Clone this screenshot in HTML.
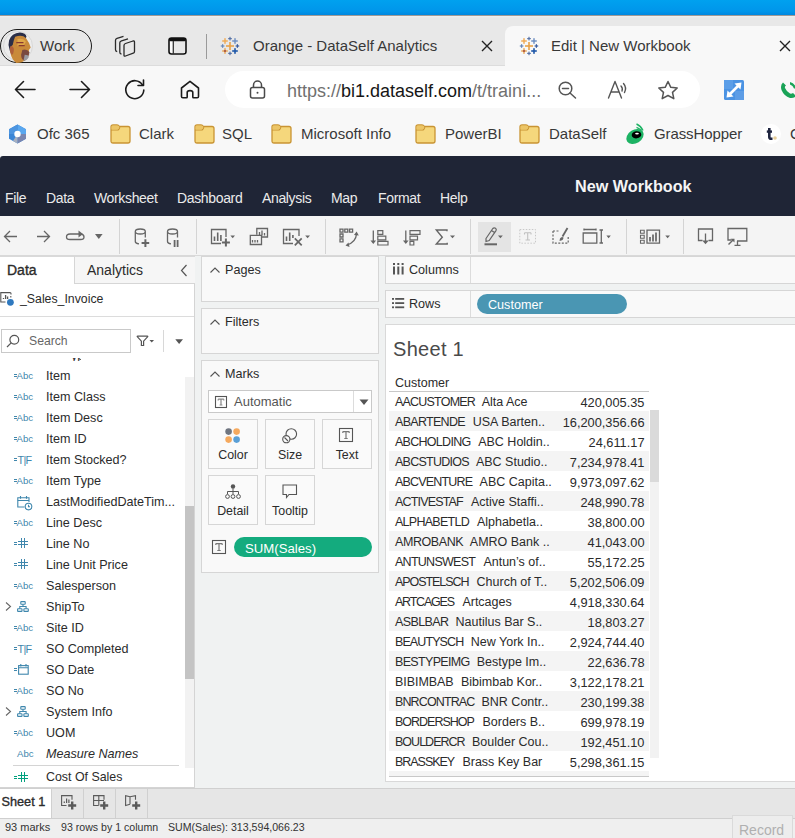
<!DOCTYPE html>
<html><head><meta charset="utf-8">
<style>
*{margin:0;padding:0;box-sizing:border-box}
html,body{width:795px;height:838px;overflow:hidden;background:#f7f7f7;font-family:"Liberation Sans",sans-serif;position:relative}
.a{position:absolute;white-space:nowrap}
svg{position:absolute;overflow:visible}
#blue{left:0;top:0;width:795px;height:16px;background:linear-gradient(#00a1ef,#0096ea 70%,#0088e0 92%,#a09a96 94%)}
#tabs{left:0;top:16px;width:795px;height:50px;border-bottom:1px solid #dcdcdc;background:linear-gradient(#f0f0f0,#e8e8e8 2px)}
.t15{font-size:15px;color:#383838}
#tbar{left:0;top:66px;width:795px;height:90px;background:#f8f8f8}
#hdr{left:0;top:156px;width:795px;height:60px;background:#1f2536;border-top-left-radius:3px}
.menu{font-size:14px;letter-spacing:-0.35px;color:#ebebeb;top:190px}
#ttb{left:0;top:216px;width:795px;height:40px;background:#f4f4f4;border-bottom:1px solid #d9d9d9}
</style></head><body>
<div class="a" id="blue"></div>
<div class="a" id="tabs"></div>
<!-- profile pill -->
<div class="a" style="left:0px;top:29px;width:92px;height:34px;border:1.6px solid #1a1a1a;border-radius:17px"></div>
<svg style="left:3px;top:31px" width="30" height="30" viewBox="0 0 30 30"><circle cx="15" cy="15" r="14.5" fill="#ececec" stroke="#d8d8d8" stroke-width="1"/>
<g transform="translate(-3.5 -1.5) scale(1.2)"><path d="M8 9 Q10 3 17 2.5 Q22 3 22.5 6 L21 9 Q15 8 13 12 L11 22 Q8 18 7.5 13 Z" fill="#2a2e48"/>
<path d="M13 6 Q19 4 22 7 Q25 11 26 15 L24.5 17 Q25 22 22 25 Q19 28 14 28 Q10 25 9 19 Q8 15 11 13 Q12 8 13 6 Z" fill="#c98a3a"/>
<path d="M15 8 Q20 7 22 10 L20 14 Q17 12 15 14 Z" fill="#e0a848"/>
<path d="M9 14 Q11 13 12 16 Q12 21 10 21 Q8 18 9 14 Z" fill="#b0603a"/>
<path d="M19 17 Q23 16 25 19 Q24 24 21 26 Q18 25 18 21 Z" fill="#7a4a40"/>
<path d="M21 21 Q24 21 24.5 23 Q23 26 20 26 Z" fill="#9a9aa0"/>
<path d="M14 11 H20 M16 13.5 H21" stroke="#8a3a30" stroke-width="1"/></g></svg>
<div class="a t15" style="left:40px;top:37px">Work</div>
<!-- inactive tab -->
<div class="a" style="left:206px;top:34px;width:1.2px;height:25px;background:#9a9a9a"></div>
<div class="a t15" style="left:253px;top:37px">Orange - DataSelf Analytics</div>
<!-- active tab -->
<div class="a" style="left:505px;top:26px;width:300px;height:41px;background:#f8f8f8;border-radius:8px 8px 0 0"></div>
<div class="a t15" style="left:551px;top:37px">Edit | New Workbook</div>
<div class="a" id="tbar"></div>
<!-- address bar -->
<div class="a" style="left:225px;top:71px;width:475px;height:37px;background:#fff;border-radius:19px"></div>
<div class="a" style="left:287px;top:80.5px;font-size:18px;color:#707070">https://<span style="color:#161616">bi1.dataself.com</span>/t/traini...</div>
<!-- bookmarks -->
<div class="a t15" style="left:37px;top:125px">Ofc 365</div>
<div class="a t15" style="left:139px;top:125px">Clark</div>
<div class="a t15" style="left:222px;top:125px">SQL</div>
<div class="a t15" style="left:301px;top:125px">Microsoft Info</div>
<div class="a t15" style="left:445px;top:125px">PowerBI</div>
<div class="a t15" style="left:549px;top:125px">DataSelf</div>
<div class="a t15" style="left:654px;top:125px;letter-spacing:-0.1px">GrassHopper</div>
<div class="a t15" style="left:790px;top:125px">C</div>

<!-- tab group icon -->
<svg style="left:114px;top:35px" width="22" height="22" viewBox="0 0 22 22" fill="none" stroke="#2b2b2b" stroke-width="1.3" stroke-linejoin="round">
<path d="M9.5 1.3 L3 3.3 Q1.5 3.8 1.5 5.3 V14.8 Q1.5 16.3 3.2 16.6"/>
<path d="M14 3.8 L7.5 5.8 Q5.8 6.3 5.8 7.8 V17.3 Q5.8 18.8 7.5 19.1"/>
<path d="M10 20.5 V10.5 Q10 9 11.5 8.5 L19 6 Q20.5 5.6 20.5 7 V16.5 Q20.5 17.8 19.3 18.2 L11.5 21 Q10 21.5 10 20.5 Z" fill="#e8e8e8"/>
</svg>
<!-- sidebar icon -->
<svg style="left:168px;top:37px" width="19" height="18" viewBox="0 0 19 18">
<rect x="1" y="1" width="17" height="16" rx="2.5" fill="#fafafa" stroke="#111" stroke-width="1.6"/>
<rect x="6" y="4" width="11" height="12" fill="#e8e8e8"/>
<rect x="1" y="1" width="17" height="3.2" rx="1.5" fill="#111"/>
<line x1="5.3" y1="4" x2="5.3" y2="17" stroke="#333" stroke-width="1.3"/>
</svg>
<svg style="left:221px;top:37px" width="18" height="18" viewBox="0 0 18 18"><rect x="5" y="8.2" width="8" height="1.6" fill="#e8a24a"/><rect x="8.2" y="5" width="1.6" height="8" fill="#e8a24a"/><rect x="7.2" y="1.0" width="3.6" height="1.2" fill="#5a74a8"/><rect x="8.4" y="-0.19999999999999996" width="1.2" height="3.6" fill="#5a74a8"/><rect x="7.2" y="15.799999999999999" width="3.6" height="1.2" fill="#5a74a8"/><rect x="8.4" y="14.599999999999998" width="1.2" height="3.6" fill="#5a74a8"/><rect x="-0.19999999999999996" y="8.4" width="3.6" height="1.2" fill="#6a88b8"/><rect x="1.0" y="7.2" width="1.2" height="3.6" fill="#6a88b8"/><rect x="14.599999999999998" y="8.4" width="3.6" height="1.2" fill="#3a5da0"/><rect x="15.799999999999999" y="7.2" width="1.2" height="3.6" fill="#3a5da0"/><rect x="1.2000000000000002" y="3.3" width="5.6" height="1.4" fill="#f0a850"/><rect x="3.3" y="1.2000000000000002" width="1.4" height="5.6" fill="#f0a850"/><rect x="11.2" y="3.3" width="5.6" height="1.4" fill="#6a8cc0"/><rect x="13.3" y="1.2000000000000002" width="1.4" height="5.6" fill="#6a8cc0"/><rect x="1.2000000000000002" y="13.3" width="5.6" height="1.4" fill="#e8a24a"/><rect x="3.3" y="11.2" width="1.4" height="5.6" fill="#e8a24a"/><rect x="3.3" y="13.3" width="1.4" height="1.4" fill="#7a1a3a"/><rect x="11.2" y="13.2" width="5.6" height="1.6" fill="#1f58a8"/><rect x="13.2" y="11.2" width="1.6" height="5.6" fill="#1f58a8"/></svg><svg style="left:520px;top:37px" width="18" height="18" viewBox="0 0 18 18"><rect x="5" y="8.2" width="8" height="1.6" fill="#e8a24a"/><rect x="8.2" y="5" width="1.6" height="8" fill="#e8a24a"/><rect x="7.2" y="1.0" width="3.6" height="1.2" fill="#5a74a8"/><rect x="8.4" y="-0.19999999999999996" width="1.2" height="3.6" fill="#5a74a8"/><rect x="7.2" y="15.799999999999999" width="3.6" height="1.2" fill="#5a74a8"/><rect x="8.4" y="14.599999999999998" width="1.2" height="3.6" fill="#5a74a8"/><rect x="-0.19999999999999996" y="8.4" width="3.6" height="1.2" fill="#6a88b8"/><rect x="1.0" y="7.2" width="1.2" height="3.6" fill="#6a88b8"/><rect x="14.599999999999998" y="8.4" width="3.6" height="1.2" fill="#3a5da0"/><rect x="15.799999999999999" y="7.2" width="1.2" height="3.6" fill="#3a5da0"/><rect x="1.2000000000000002" y="3.3" width="5.6" height="1.4" fill="#f0a850"/><rect x="3.3" y="1.2000000000000002" width="1.4" height="5.6" fill="#f0a850"/><rect x="11.2" y="3.3" width="5.6" height="1.4" fill="#6a8cc0"/><rect x="13.3" y="1.2000000000000002" width="1.4" height="5.6" fill="#6a8cc0"/><rect x="1.2000000000000002" y="13.3" width="5.6" height="1.4" fill="#e8a24a"/><rect x="3.3" y="11.2" width="1.4" height="5.6" fill="#e8a24a"/><rect x="3.3" y="13.3" width="1.4" height="1.4" fill="#7a1a3a"/><rect x="11.2" y="13.2" width="5.6" height="1.6" fill="#1f58a8"/><rect x="13.2" y="11.2" width="1.6" height="5.6" fill="#1f58a8"/></svg>
<!-- close X -->
<svg style="left:481px;top:40px" width="12" height="12" viewBox="0 0 12 12" stroke="#222" stroke-width="1.4"><path d="M1 1 L11 11 M11 1 L1 11"/></svg>
<svg style="left:779px;top:40px" width="12" height="12" viewBox="0 0 12 12" stroke="#222" stroke-width="1.4"><path d="M1 1 L11 11 M11 1 L1 11"/></svg>
<!-- nav -->
<svg style="left:14px;top:80px" width="22" height="19" viewBox="0 0 22 19" fill="none" stroke="#1b1b1b" stroke-width="1.6" stroke-linecap="round" stroke-linejoin="round"><path d="M21 9.5 H1.5 M9.5 1.5 L1.5 9.5 L9.5 17.5"/></svg>
<svg style="left:69px;top:80px" width="22" height="19" viewBox="0 0 22 19" fill="none" stroke="#1b1b1b" stroke-width="1.6" stroke-linecap="round" stroke-linejoin="round"><path d="M1 9.5 H20.5 M12.5 1.5 L20.5 9.5 L12.5 17.5"/></svg>
<svg style="left:124px;top:79px" width="22" height="21" viewBox="0 0 22 21" fill="none" stroke="#1b1b1b" stroke-width="1.6" stroke-linecap="round" stroke-linejoin="round"><path d="M18.5 6 A9 9 0 1 0 19.8 11"/><path d="M19.5 1 V6.5 H14"/></svg>
<svg style="left:180px;top:80px" width="20" height="19" viewBox="0 0 20 19" fill="none" stroke="#1b1b1b" stroke-width="1.6" stroke-linejoin="round"><path d="M1.5 8 L10 1.3 L18.5 8 V16.5 Q18.5 17.8 17.2 17.8 H13.5 Q12.8 17.8 12.8 17 V12.5 Q12.8 10.6 10 10.6 Q7.2 10.6 7.2 12.5 V17 Q7.2 17.8 6.5 17.8 H2.8 Q1.5 17.8 1.5 16.5 Z"/></svg>
<!-- lock -->
<svg style="left:249px;top:80px" width="17" height="19" viewBox="0 0 17 19" fill="none" stroke="#4a4a4a" stroke-width="1.5"><path d="M4.5 7.5 V5 A4 4 0 0 1 12.5 5 V7.5"/><rect x="1.5" y="7.5" width="14" height="10.5" rx="2"/><circle cx="8.5" cy="12.8" r="1" fill="#4a4a4a" stroke="none"/></svg>
<!-- zoom out -->
<svg style="left:558px;top:81px" width="19" height="18" viewBox="0 0 19 18" fill="none" stroke="#555" stroke-width="1.5" stroke-linecap="round"><circle cx="7.5" cy="7.5" r="6.3"/><path d="M12 12 L17.5 17 M4.5 7.5 H10.5"/></svg>
<!-- read aloud -->
<svg style="left:607px;top:80px" width="22" height="19" viewBox="0 0 22 19" fill="none" stroke="#555" stroke-width="1.4" stroke-linecap="round" stroke-linejoin="round"><path d="M1.5 18 L8 1.5 L14.5 18 M4 12 H12"/><path d="M14 6 Q16 8 15 11 M16.5 3.5 Q20 7.5 17.5 12.5"/></svg>
<!-- star -->
<svg style="left:657px;top:80px" width="22" height="20" viewBox="0 0 22 20" fill="none" stroke="#555" stroke-width="1.5" stroke-linejoin="round"><path d="M11 1.5 L13.8 7.3 L20.2 8 L15.5 12.4 L16.8 18.7 L11 15.5 L5.2 18.7 L6.5 12.4 L1.8 8 L8.2 7.3 Z"/></svg>
<!-- blue expand -->
<svg style="left:724px;top:80px" width="20" height="20" viewBox="0 0 20 20"><rect width="20" height="20" rx="1.5" fill="#4b93e3"/><rect x="0" y="0" width="9" height="9" fill="#5b9ee8"/><rect x="11" y="11" width="9" height="9" fill="#5d9de6"/><path d="M4 16 L16 4" stroke="#fff" stroke-width="2.6"/><path d="M2.5 17.5 L3.5 10.5 L9.5 16.5 Z M17.5 2.5 L10.5 3.5 L16.5 9.5 Z" fill="#fff"/></svg>
<!-- green phone -->
<svg style="left:780px;top:81px" width="18" height="18" viewBox="0 0 18 18"><path d="M3 1.5 Q0 4 1.5 9 Q4 15 10 17 Q14 17.5 16 15 L13 12 Q11.5 13 10 12.5 Q6.5 10.5 5 7 Q4.5 5.5 6 4.5 Z" fill="#1aa357"/><path d="M10 1 Q15 2.5 16.5 7.5 L14 7.5 Q13 4.5 10 3.5 Z" fill="#1aa357"/></svg>
<!-- bookmarks icons -->
<svg style="left:8px;top:124px" width="19" height="20" viewBox="0 0 19 20"><path d="M9.5 0.5 L18 5.3 V14.7 L9.5 19.5 L1 14.7 V5.3 Z" fill="#3b86d6"/><path d="M9.5 0.5 L18 5.3 V10 L9.5 10 Z" fill="#5aa7ef"/><path d="M18 10 V14.7 L9.5 19.5 L9.5 10 Z" fill="#7a86b0"/><path d="M9.5 19.5 L5 17 L9.5 10 Z" fill="#a8b0c0"/><path d="M1 5.3 L9.5 0.5 L9.5 10 L1 10 Z" fill="#4d95e0"/><circle cx="9.5" cy="10" r="3.2" fill="#fff"/></svg>
<svg style="left:110px;top:124px" width="21" height="20" viewBox="0 0 21 20"><path d="M1 3 Q1 1 3 1 H7 Q8.5 1 9.5 2.5 H18 Q20 2.5 20 4.5 V17 Q20 19 18 19 H3 Q1 19 1 17 Z" fill="#f5d77c" stroke="#c99433" stroke-width="1.3"/><path d="M1 6 H7.5 Q9 6 9.8 3" fill="none" stroke="#c99433" stroke-width="1.2"/><path d="M1.6 3 Q1.6 1.6 3 1.6 H7 Q8.5 1.6 9.5 3 Q8.8 5.4 7.5 5.4 H1.6 Z" fill="#ecc566"/></svg><svg style="left:194px;top:124px" width="21" height="20" viewBox="0 0 21 20"><path d="M1 3 Q1 1 3 1 H7 Q8.5 1 9.5 2.5 H18 Q20 2.5 20 4.5 V17 Q20 19 18 19 H3 Q1 19 1 17 Z" fill="#f5d77c" stroke="#c99433" stroke-width="1.3"/><path d="M1 6 H7.5 Q9 6 9.8 3" fill="none" stroke="#c99433" stroke-width="1.2"/><path d="M1.6 3 Q1.6 1.6 3 1.6 H7 Q8.5 1.6 9.5 3 Q8.8 5.4 7.5 5.4 H1.6 Z" fill="#ecc566"/></svg><svg style="left:271px;top:124px" width="21" height="20" viewBox="0 0 21 20"><path d="M1 3 Q1 1 3 1 H7 Q8.5 1 9.5 2.5 H18 Q20 2.5 20 4.5 V17 Q20 19 18 19 H3 Q1 19 1 17 Z" fill="#f5d77c" stroke="#c99433" stroke-width="1.3"/><path d="M1 6 H7.5 Q9 6 9.8 3" fill="none" stroke="#c99433" stroke-width="1.2"/><path d="M1.6 3 Q1.6 1.6 3 1.6 H7 Q8.5 1.6 9.5 3 Q8.8 5.4 7.5 5.4 H1.6 Z" fill="#ecc566"/></svg><svg style="left:415px;top:124px" width="21" height="20" viewBox="0 0 21 20"><path d="M1 3 Q1 1 3 1 H7 Q8.5 1 9.5 2.5 H18 Q20 2.5 20 4.5 V17 Q20 19 18 19 H3 Q1 19 1 17 Z" fill="#f5d77c" stroke="#c99433" stroke-width="1.3"/><path d="M1 6 H7.5 Q9 6 9.8 3" fill="none" stroke="#c99433" stroke-width="1.2"/><path d="M1.6 3 Q1.6 1.6 3 1.6 H7 Q8.5 1.6 9.5 3 Q8.8 5.4 7.5 5.4 H1.6 Z" fill="#ecc566"/></svg><svg style="left:519px;top:124px" width="21" height="20" viewBox="0 0 21 20"><path d="M1 3 Q1 1 3 1 H7 Q8.5 1 9.5 2.5 H18 Q20 2.5 20 4.5 V17 Q20 19 18 19 H3 Q1 19 1 17 Z" fill="#f5d77c" stroke="#c99433" stroke-width="1.3"/><path d="M1 6 H7.5 Q9 6 9.8 3" fill="none" stroke="#c99433" stroke-width="1.2"/><path d="M1.6 3 Q1.6 1.6 3 1.6 H7 Q8.5 1.6 9.5 3 Q8.8 5.4 7.5 5.4 H1.6 Z" fill="#ecc566"/></svg>
<svg style="left:620px;top:118px" width="30" height="30" viewBox="0 0 30 30"><ellipse cx="15" cy="18.5" rx="9.3" ry="6.8" fill="#1db364" transform="rotate(-32 15 18.5)"/><path d="M16.5 6 Q21 8 23 12.5 M16.5 9.3 Q19.5 10.5 21.3 12.5" stroke="#1db364" stroke-width="1.4" fill="none"/><ellipse cx="16.5" cy="16.8" rx="4.8" ry="3.6" fill="#000" transform="rotate(-8 16.5 16.8)"/><ellipse cx="17" cy="15.6" rx="1.9" ry="0.9" fill="#fff"/></svg>
<svg style="left:761px;top:124px" width="20" height="20" viewBox="0 0 20 20"><circle cx="10" cy="10" r="10" fill="#fff"/><path d="M8.3 4 V13 Q8.3 14.8 10.2 14.8 H11.5" stroke="#1f2540" stroke-width="2.6" fill="none"/><path d="M5.8 7.6 H11" stroke="#1f2540" stroke-width="2.4"/><circle cx="14" cy="14" r="1.8" fill="#e8cf9a"/></svg>

<!-- tableau header -->
<div class="a" id="hdr"></div>
<div class="a" style="left:575px;top:177px;font-size:16.2px;font-weight:bold;color:#f5f5f5">New Workbook</div>
<div class="a menu" style="left:5px">File</div>
<div class="a menu" style="left:46px">Data</div>
<div class="a menu" style="left:94px">Worksheet</div>
<div class="a menu" style="left:177px">Dashboard</div>
<div class="a menu" style="left:262px">Analysis</div>
<div class="a menu" style="left:331px">Map</div>
<div class="a menu" style="left:378px">Format</div>
<div class="a menu" style="left:440px">Help</div>
<div class="a" id="ttb"></div>
<!-- PANES1 -->
<div class="a" style="left:0;top:256px;width:795px;height:532px;background:#f0f2f2"></div>
<div class="a" style="left:0;top:256px;width:195px;height:532px;background:#fff;border-right:1px solid #d4d4d4;border-top:1px solid #d9d9d9;border-bottom:1px solid #d4d4d4"></div>
<div class="a" style="left:74px;top:256px;width:121px;height:28px;background:#f6f6f6;border-left:1px solid #d6d6d6;border-bottom:1px solid #d6d6d6;border-top:1px solid #d9d9d9"></div>
<div class="a tb" style="left:7px;top:262px;font-size:14px;-webkit-text-stroke:0.35px #2b2b2b;color:#2b2b2b">Data</div>
<div class="a tb" style="left:87px;top:262px;font-size:14px;color:#2b2b2b">Analytics</div>
<svg style="left:180px;top:264px" width="8" height="13" viewBox="0 0 8 13" fill="none" stroke="#555" stroke-width="1.2"><path d="M6.5 1 L1.5 6.5 L6.5 12"/></svg>
<svg style="left:0;top:291px" width="16" height="16" viewBox="0 0 16 16" fill="none" stroke="#555" stroke-width="1.1"><path d="M5.5 11 H0.8 V1.6 H10 Q11 1.6 11 2.6 V3.5 M10.8 5 V6.5"/><path d="M3.5 8 V7 M5.6 8 V4 M7.6 8 V5.5" stroke-width="1.3"/><circle cx="10.4" cy="11.3" r="3.4" fill="#2f79bf" stroke="none"/></svg>
<div class="a tb" style="left:20px;top:292px;font-size:12.3px;color:#2b2b2b">_Sales_Invoice</div>
<div class="a" style="left:0;top:316px;width:194px;height:1px;background:#dcdcdc"></div>
<div class="a" style="left:1px;top:329px;width:130px;height:24px;border:1px solid #c9c9c9;background:#fff"></div>
<svg style="left:6px;top:334px" width="14" height="14" viewBox="0 0 14 14" fill="none" stroke="#555" stroke-width="1.2"><circle cx="8.3" cy="5.7" r="4.4"/><path d="M5.2 8.8 L1 13"/></svg>
<div class="a tb" style="left:29px;top:334px;font-size:12.2px;color:#666">Search</div>
<svg style="left:136px;top:334px" width="22" height="14" viewBox="0 0 22 14" fill="none" stroke="#555" stroke-width="1.2"><path d="M1.2 2.6 Q1.2 2.2 1.7 2.2 H11.3 Q11.8 2.2 11.8 2.6 L7.6 7.2 V11.5 H5.4 V7.2 Z"/><path d="M13.5 6 H18 L15.75 8.5 Z" fill="#555" stroke="none"/></svg>
<div class="a" style="left:163px;top:330px;width:1px;height:22px;background:#d8d8d8"></div>
<svg style="left:175px;top:339px" width="9" height="6" viewBox="0 0 9 6"><path d="M0.3 0.3 H8 L4.15 5 Z" fill="#555"/></svg>
<div class="a" style="left:14px;top:374px;width:3px;height:1.2px;background:#3f87ad"></div><div class="a" style="left:14px;top:376.3px;width:3px;height:1.2px;background:#3f87ad"></div><div class="a" style="left:16.5px;top:371px;font-size:9.6px;line-height:10px;color:#3f87ad;letter-spacing:0px">Abc</div>
<div class="a tb" style="left:46px;top:369px;font-size:12.6px;color:#2b2b2b;">Item</div>
<div class="a" style="left:14px;top:395px;width:3px;height:1.2px;background:#3f87ad"></div><div class="a" style="left:14px;top:397.3px;width:3px;height:1.2px;background:#3f87ad"></div><div class="a" style="left:16.5px;top:392px;font-size:9.6px;line-height:10px;color:#3f87ad;letter-spacing:0px">Abc</div>
<div class="a tb" style="left:46px;top:390px;font-size:12.6px;color:#2b2b2b;">Item Class</div>
<div class="a" style="left:14px;top:416px;width:3px;height:1.2px;background:#3f87ad"></div><div class="a" style="left:14px;top:418.3px;width:3px;height:1.2px;background:#3f87ad"></div><div class="a" style="left:16.5px;top:413px;font-size:9.6px;line-height:10px;color:#3f87ad;letter-spacing:0px">Abc</div>
<div class="a tb" style="left:46px;top:411px;font-size:12.6px;color:#2b2b2b;">Item Desc</div>
<div class="a" style="left:14px;top:437px;width:3px;height:1.2px;background:#3f87ad"></div><div class="a" style="left:14px;top:439.3px;width:3px;height:1.2px;background:#3f87ad"></div><div class="a" style="left:16.5px;top:434px;font-size:9.6px;line-height:10px;color:#3f87ad;letter-spacing:0px">Abc</div>
<div class="a tb" style="left:46px;top:432px;font-size:12.6px;color:#2b2b2b;">Item ID</div>
<div class="a" style="left:14px;top:458px;width:3px;height:1.2px;background:#3f87ad"></div><div class="a" style="left:14px;top:460.3px;width:3px;height:1.2px;background:#3f87ad"></div><div class="a" style="left:17.5px;top:454.5px;font-size:10.8px;line-height:11px;color:#3f87ad;letter-spacing:-0.7px">T|F</div>
<div class="a tb" style="left:46px;top:453px;font-size:12.6px;color:#2b2b2b;">Item Stocked?</div>
<div class="a" style="left:14px;top:479px;width:3px;height:1.2px;background:#3f87ad"></div><div class="a" style="left:14px;top:481.3px;width:3px;height:1.2px;background:#3f87ad"></div><div class="a" style="left:16.5px;top:476px;font-size:9.6px;line-height:10px;color:#3f87ad;letter-spacing:0px">Abc</div>
<div class="a tb" style="left:46px;top:474px;font-size:12.6px;color:#2b2b2b;">Item Type</div>
<svg style="left:17px;top:495px" width="16" height="16" viewBox="0 0 16 16" fill="none" stroke="#3f87ad" stroke-width="1.1"><path d="M7.5 12 H0.8 V2.8 H12 V7"/><path d="M0.8 5.5 H12 M3.5 1 V3.8 M9.5 1 V3.8"/><circle cx="11.5" cy="11.6" r="3.3" fill="#fff"/><path d="M11.5 9.8 V11.8 H13"/></svg>
<div class="a tb" style="left:46px;top:495px;font-size:12.6px;color:#2b2b2b;">LastModifiedDateTim...</div>
<div class="a" style="left:14px;top:521px;width:3px;height:1.2px;background:#3f87ad"></div><div class="a" style="left:14px;top:523.3px;width:3px;height:1.2px;background:#3f87ad"></div><div class="a" style="left:16.5px;top:518px;font-size:9.6px;line-height:10px;color:#3f87ad;letter-spacing:0px">Abc</div>
<div class="a tb" style="left:46px;top:516px;font-size:12.6px;color:#2b2b2b;">Line Desc</div>
<div class="a" style="left:14px;top:542px;width:3px;height:1.2px;background:#3f87ad"></div><div class="a" style="left:14px;top:544.3px;width:3px;height:1.2px;background:#3f87ad"></div><div class="a" style="left:21px;top:538px;width:1.3px;height:10px;background:#3f87ad"></div><div class="a" style="left:24px;top:538px;width:1.3px;height:10px;background:#3f87ad"></div><div class="a" style="left:18px;top:541px;width:10px;height:1.3px;background:#3f87ad"></div><div class="a" style="left:18px;top:544px;width:10px;height:1.3px;background:#3f87ad"></div>
<div class="a tb" style="left:46px;top:537px;font-size:12.6px;color:#2b2b2b;">Line No</div>
<div class="a" style="left:14px;top:563px;width:3px;height:1.2px;background:#3f87ad"></div><div class="a" style="left:14px;top:565.3px;width:3px;height:1.2px;background:#3f87ad"></div><div class="a" style="left:21px;top:559px;width:1.3px;height:10px;background:#3f87ad"></div><div class="a" style="left:24px;top:559px;width:1.3px;height:10px;background:#3f87ad"></div><div class="a" style="left:18px;top:562px;width:10px;height:1.3px;background:#3f87ad"></div><div class="a" style="left:18px;top:565px;width:10px;height:1.3px;background:#3f87ad"></div>
<div class="a tb" style="left:46px;top:558px;font-size:12.6px;color:#2b2b2b;">Line Unit Price</div>
<div class="a" style="left:14px;top:584px;width:3px;height:1.2px;background:#3f87ad"></div><div class="a" style="left:14px;top:586.3px;width:3px;height:1.2px;background:#3f87ad"></div><div class="a" style="left:16.5px;top:581px;font-size:9.6px;line-height:10px;color:#3f87ad;letter-spacing:0px">Abc</div>
<div class="a tb" style="left:46px;top:579px;font-size:12.6px;color:#2b2b2b;">Salesperson</div>
<svg style="left:5px;top:601px" width="8" height="12" viewBox="0 0 8 12" fill="none" stroke="#666" stroke-width="1.1"><path d="M1 1.5 L5.5 5.5 L1 9.5"/></svg><svg style="left:17px;top:601px" width="12" height="12" viewBox="0 0 12 12" fill="none" stroke="#3f87ad" stroke-width="1.1"><rect x="3.8" y="0.6" width="4.4" height="2.6" rx="0.5"/><rect x="0.6" y="7.8" width="4.4" height="2.6" rx="0.5"/><rect x="6.9" y="7.8" width="4.4" height="2.6" rx="0.5"/><path d="M6 3.2 V5.5 M2.8 7.8 V5.5 H9.1 V7.8"/></svg>
<div class="a tb" style="left:46px;top:600px;font-size:12.6px;color:#2b2b2b;">ShipTo</div>
<div class="a" style="left:14px;top:626px;width:3px;height:1.2px;background:#3f87ad"></div><div class="a" style="left:14px;top:628.3px;width:3px;height:1.2px;background:#3f87ad"></div><div class="a" style="left:16.5px;top:623px;font-size:9.6px;line-height:10px;color:#3f87ad;letter-spacing:0px">Abc</div>
<div class="a tb" style="left:46px;top:621px;font-size:12.6px;color:#2b2b2b;">Site ID</div>
<div class="a" style="left:14px;top:647px;width:3px;height:1.2px;background:#3f87ad"></div><div class="a" style="left:14px;top:649.3px;width:3px;height:1.2px;background:#3f87ad"></div><div class="a" style="left:17.5px;top:643.5px;font-size:10.8px;line-height:11px;color:#3f87ad;letter-spacing:-0.7px">T|F</div>
<div class="a tb" style="left:46px;top:642px;font-size:12.6px;color:#2b2b2b;">SO Completed</div>
<div class="a" style="left:14px;top:668px;width:3px;height:1.2px;background:#3f87ad"></div><div class="a" style="left:14px;top:670.3px;width:3px;height:1.2px;background:#3f87ad"></div><svg style="left:18px;top:664px" width="12" height="12" viewBox="0 0 12 12" fill="none" stroke="#3f87ad" stroke-width="1.1"><rect x="0.6" y="1.6" width="9.6" height="8.6"/><path d="M0.6 3.8 H10.2 M2.8 0 V2.5 M8 0 V2.5"/></svg>
<div class="a tb" style="left:46px;top:663px;font-size:12.6px;color:#2b2b2b;">SO Date</div>
<div class="a" style="left:14px;top:689px;width:3px;height:1.2px;background:#3f87ad"></div><div class="a" style="left:14px;top:691.3px;width:3px;height:1.2px;background:#3f87ad"></div><div class="a" style="left:16.5px;top:686px;font-size:9.6px;line-height:10px;color:#3f87ad;letter-spacing:0px">Abc</div>
<div class="a tb" style="left:46px;top:684px;font-size:12.6px;color:#2b2b2b;">SO No</div>
<svg style="left:5px;top:706px" width="8" height="12" viewBox="0 0 8 12" fill="none" stroke="#666" stroke-width="1.1"><path d="M1 1.5 L5.5 5.5 L1 9.5"/></svg><svg style="left:17px;top:706px" width="12" height="12" viewBox="0 0 12 12" fill="none" stroke="#3f87ad" stroke-width="1.1"><rect x="3.8" y="0.6" width="4.4" height="2.6" rx="0.5"/><rect x="0.6" y="7.8" width="4.4" height="2.6" rx="0.5"/><rect x="6.9" y="7.8" width="4.4" height="2.6" rx="0.5"/><path d="M6 3.2 V5.5 M2.8 7.8 V5.5 H9.1 V7.8"/></svg>
<div class="a tb" style="left:46px;top:705px;font-size:12.6px;color:#2b2b2b;">System Info</div>
<div class="a" style="left:14px;top:731px;width:3px;height:1.2px;background:#3f87ad"></div><div class="a" style="left:14px;top:733.3px;width:3px;height:1.2px;background:#3f87ad"></div><div class="a" style="left:16.5px;top:728px;font-size:9.6px;line-height:10px;color:#3f87ad;letter-spacing:0px">Abc</div>
<div class="a tb" style="left:46px;top:726px;font-size:12.6px;color:#2b2b2b;">UOM</div>
<div class="a" style="left:17px;top:749px;font-size:9.6px;line-height:10px;color:#3f87ad;letter-spacing:0px">Abc</div>
<div class="a tb" style="left:46px;top:747px;font-size:12.6px;color:#2b2b2b;font-style:italic;">Measure Names</div>
<div class="a" style="left:71px;top:358px;width:10px;height:3px;overflow:hidden"><div style="position:absolute;left:0;top:-9px;font-size:12.6px;color:#333">yp</div></div>
<div class="a" style="left:13px;top:765px;width:166px;height:1px;background:#d4d4d4"></div>
<div class="a" style="left:14px;top:776px;width:3px;height:1.2px;background:#00a07e"></div><div class="a" style="left:14px;top:778.3px;width:3px;height:1.2px;background:#00a07e"></div><div class="a" style="left:21px;top:772px;width:1.3px;height:10px;background:#00a07e"></div><div class="a" style="left:24px;top:772px;width:1.3px;height:10px;background:#00a07e"></div><div class="a" style="left:18px;top:775px;width:10px;height:1.3px;background:#00a07e"></div><div class="a" style="left:18px;top:778px;width:10px;height:1.3px;background:#00a07e"></div>
<div class="a tb" style="left:46px;top:770px;font-size:12.4px;color:#2b2b2b">Cost Of Sales</div>
<div class="a" style="left:185px;top:377px;width:9px;height:391px;background:#f2f2f2"></div>
<div class="a" style="left:185px;top:506px;width:9px;height:173px;background:#c4c4c4"></div>
<!-- /PANES1 -->
<!-- PANES2 -->
<div class="a" style="left:201px;top:256px;width:178px;height:46px;background:#f9f9f9;border:1px solid #d6d6d6"></div>
<div class="a" style="left:201px;top:308px;width:178px;height:46px;background:#f9f9f9;border:1px solid #d6d6d6"></div>
<div class="a" style="left:201px;top:360px;width:178px;height:213px;background:#f9f9f9;border:1px solid #d6d6d6"></div>
<svg style="left:210px;top:267px" width="10" height="6" viewBox="0 0 10 6" fill="none" stroke="#555" stroke-width="1.1"><path d="M0.5 5.5 L5 1 L9.5 5.5"/></svg>
<div class="a tb" style="left:225px;top:263px;font-size:12.6px;color:#2b2b2b">Pages</div>
<svg style="left:210px;top:319px" width="10" height="6" viewBox="0 0 10 6" fill="none" stroke="#555" stroke-width="1.1"><path d="M0.5 5.5 L5 1 L9.5 5.5"/></svg>
<div class="a tb" style="left:225px;top:315px;font-size:12.6px;color:#2b2b2b">Filters</div>
<svg style="left:210px;top:371px" width="10" height="6" viewBox="0 0 10 6" fill="none" stroke="#555" stroke-width="1.1"><path d="M0.5 5.5 L5 1 L9.5 5.5"/></svg>
<div class="a tb" style="left:225px;top:367px;font-size:12.6px;color:#2b2b2b">Marks</div>
<div class="a" style="left:208px;top:390px;width:164px;height:23px;background:#fff;border:1px solid #c9c9c9"></div>
<div class="a" style="left:353px;top:391px;width:1px;height:21px;background:#dcdcdc"></div>
<svg style="left:359px;top:399px" width="10" height="7" viewBox="0 0 10 7"><path d="M0.5 0.5 H9.5 L5 6 Z" fill="#555"/></svg>
<svg style="left:215px;top:396px" width="12" height="12" viewBox="0 0 12 12" fill="none" stroke="#555" stroke-width="1.1"><rect x="0.5" y="0.5" width="11" height="11"/><path d="M3.2 3.2 H8.8 M6 3.2 V9 M4.6 9 H7.4 M3.2 3.2 V4.4 M8.8 3.2 V4.4" stroke="#888" stroke-width="1.2"/></svg>
<div class="a tb" style="left:234px;top:394px;font-size:13px;color:#555">Automatic</div>
<div class="a" style="left:208px;top:419px;width:50px;height:50px;background:#fafafa;border:1px solid #d6d6d6"></div>
<div class="a tb" style="left:208px;top:448px;width:50px;text-align:center;font-size:12.4px;color:#2b2b2b">Color</div>
<div class="a" style="left:265px;top:419px;width:50px;height:50px;background:#fafafa;border:1px solid #d6d6d6"></div>
<div class="a tb" style="left:265px;top:448px;width:50px;text-align:center;font-size:12.4px;color:#2b2b2b">Size</div>
<div class="a" style="left:322px;top:419px;width:50px;height:50px;background:#fafafa;border:1px solid #d6d6d6"></div>
<div class="a tb" style="left:322px;top:448px;width:50px;text-align:center;font-size:12.4px;color:#2b2b2b">Text</div>
<div class="a" style="left:208px;top:475px;width:50px;height:50px;background:#fafafa;border:1px solid #d6d6d6"></div>
<div class="a tb" style="left:208px;top:504px;width:50px;text-align:center;font-size:12.4px;color:#2b2b2b">Detail</div>
<div class="a" style="left:265px;top:475px;width:50px;height:50px;background:#fafafa;border:1px solid #d6d6d6"></div>
<div class="a tb" style="left:265px;top:504px;width:50px;text-align:center;font-size:12.4px;color:#2b2b2b">Tooltip</div>
<svg style="left:225px;top:428px" width="16" height="16" viewBox="0 0 16 16"><circle cx="3.6" cy="3.6" r="3.3" fill="#6f7580"/><circle cx="11.6" cy="3.6" r="3.3" fill="#f5a95e"/><circle cx="3.6" cy="11.6" r="3.3" fill="#f5a95e"/><circle cx="11.6" cy="11.6" r="3.3" fill="#5a9fd6"/></svg>
<svg style="left:282px;top:428px" width="16" height="16" viewBox="0 0 16 16" fill="none" stroke="#555" stroke-width="1.1"><circle cx="9.3" cy="6" r="5.3"/><circle cx="4.3" cy="11.2" r="3.6" fill="#fafafa"/><path d="M2.5 9.5 L6 13"/></svg>
<svg style="left:339px;top:428px" width="14" height="14" viewBox="0 0 14 14" fill="none" stroke="#555" stroke-width="1.1"><rect x="0.5" y="0.5" width="13" height="13"/><path d="M3.8 3.6 H10.2 M7 3.6 V10.5 M5.3 10.5 H8.7 M3.8 3.6 V5 M10.2 3.6 V5" stroke="#777" stroke-width="1.2"/></svg>
<svg style="left:225px;top:484px" width="16" height="16" viewBox="0 0 16 16" fill="none" stroke="#555" stroke-width="1"><circle cx="8" cy="2.5" r="2.2" fill="#555" stroke="none"/><path d="M8 4.5 V7.5 M2.5 10 V7.5 H13.5 V10 M8 7.5 V10"/><circle cx="2.5" cy="12.5" r="1.9"/><circle cx="8" cy="12.5" r="1.9"/><circle cx="13.5" cy="12.5" r="1.9"/></svg>
<svg style="left:282px;top:484px" width="16" height="16" viewBox="0 0 16 16" fill="none" stroke="#555" stroke-width="1.1"><path d="M1 1 H14.5 V10.5 H7 L4.5 13.5 V10.5 H1 Z"/></svg>
<svg style="left:212px;top:540px" width="14" height="14" viewBox="0 0 14 14" fill="none" stroke="#555" stroke-width="1.1"><rect x="0.5" y="0.5" width="13" height="13"/><path d="M3.8 3.6 H10.2 M7 3.6 V10.5 M5.3 10.5 H8.7 M3.8 3.6 V5 M10.2 3.6 V5" stroke="#777" stroke-width="1.2"/></svg>
<div class="a" style="left:234px;top:537px;width:138px;height:20px;background:#14ab7e;border-radius:10px"></div>
<div class="a tb" style="left:245px;top:541px;font-size:13.2px;color:#fff">SUM(Sales)</div>
<div class="a" style="left:385px;top:256px;width:420px;height:28px;background:#f9f9f9;border:1px solid #d6d6d6"></div>
<div class="a" style="left:470px;top:257px;width:1px;height:26px;background:#dcdcdc"></div>
<svg style="left:393px;top:263px" width="11" height="12" viewBox="0 0 11 12" fill="#555"><rect x="0" y="0" width="2" height="2"/><rect x="4.3" y="0" width="2" height="2"/><rect x="8.6" y="0" width="2" height="2"/><rect x="0" y="3.5" width="2" height="8"/><rect x="4.3" y="3.5" width="2" height="8"/><rect x="8.6" y="3.5" width="2" height="8"/></svg>
<div class="a tb" style="left:409px;top:263px;font-size:12.6px;color:#2b2b2b">Columns</div>
<div class="a" style="left:385px;top:290px;width:420px;height:28px;background:#f9f9f9;border:1px solid #d6d6d6"></div>
<div class="a" style="left:470px;top:291px;width:1px;height:26px;background:#dcdcdc"></div>
<svg style="left:392px;top:298px" width="13" height="11" viewBox="0 0 13 11" fill="#555"><rect x="0" y="0" width="2" height="1.8"/><rect x="3.2" y="0" width="9" height="1.8"/><rect x="0" y="4.2" width="2" height="1.8"/><rect x="3.2" y="4.2" width="9" height="1.8"/><rect x="0" y="8.4" width="2" height="1.8"/><rect x="3.2" y="8.4" width="9" height="1.8"/></svg>
<div class="a tb" style="left:409px;top:297px;font-size:12.6px;color:#2b2b2b">Rows</div>
<div class="a" style="left:477px;top:294px;width:150px;height:20px;background:#4a96b3;border-radius:10px"></div>
<div class="a tb" style="left:488px;top:298px;font-size:12.6px;color:#fff">Customer</div>
<div class="a" style="left:385px;top:324px;width:420px;height:458px;background:#fff;border:1px solid #d9d9d9"></div>
<div class="a" style="left:393px;top:338px;font-size:20px;color:#4a4a4a;letter-spacing:0.3px">Sheet 1</div>
<div class="a tb" style="left:395px;top:375.5px;font-size:12.5px;color:#2b2b2b">Customer</div>
<div class="a" style="left:389px;top:391px;width:260px;height:1px;background:#c8c8c8"></div>
<div class="a" style="left:389px;top:411px;width:260px;height:20px;background:#f4f4f4"></div>
<div class="a" style="left:389px;top:451px;width:260px;height:20px;background:#f4f4f4"></div>
<div class="a" style="left:389px;top:491px;width:260px;height:20px;background:#f4f4f4"></div>
<div class="a" style="left:389px;top:531px;width:260px;height:20px;background:#f4f4f4"></div>
<div class="a" style="left:389px;top:571px;width:260px;height:20px;background:#f4f4f4"></div>
<div class="a" style="left:389px;top:611px;width:260px;height:20px;background:#f4f4f4"></div>
<div class="a" style="left:389px;top:651px;width:260px;height:20px;background:#f4f4f4"></div>
<div class="a" style="left:389px;top:691px;width:260px;height:20px;background:#f4f4f4"></div>
<div class="a" style="left:389px;top:731px;width:260px;height:20px;background:#f4f4f4"></div>
<div class="a" style="left:389px;top:771px;width:260px;height:6px;background:#f4f4f4"></div>
<div class="a tb" style="left:395px;top:395px;font-size:12.5px;color:#2b2b2b;letter-spacing:-0.794px">AACUSTOMER</div>
<div class="a tb" style="left:481.7px;top:395px;font-size:12.5px;color:#2b2b2b">Alta Ace</div>
<div class="a tb" style="left:520px;top:395px;width:124.5px;text-align:right;font-size:12.8px;color:#2b2b2b">420,005.35</div>
<div class="a tb" style="left:395px;top:415px;font-size:12.5px;color:#2b2b2b;letter-spacing:-0.700px">ABARTENDE</div>
<div class="a tb" style="left:472.7px;top:415px;font-size:12.5px;color:#2b2b2b">USA Barten..</div>
<div class="a tb" style="left:520px;top:415px;width:124.5px;text-align:right;font-size:12.8px;color:#2b2b2b">16,200,356.66</div>
<div class="a tb" style="left:395px;top:435px;font-size:12.5px;color:#2b2b2b;letter-spacing:-0.717px">ABCHOLDING</div>
<div class="a tb" style="left:478.2px;top:435px;font-size:12.5px;color:#2b2b2b">ABC Holdin..</div>
<div class="a tb" style="left:520px;top:435px;width:124.5px;text-align:right;font-size:12.8px;color:#2b2b2b">24,611.17</div>
<div class="a tb" style="left:395px;top:455px;font-size:12.5px;color:#2b2b2b;letter-spacing:-0.750px">ABCSTUDIOS</div>
<div class="a tb" style="left:475.9px;top:455px;font-size:12.5px;color:#2b2b2b">ABC Studio..</div>
<div class="a tb" style="left:520px;top:455px;width:124.5px;text-align:right;font-size:12.8px;color:#2b2b2b">7,234,978.41</div>
<div class="a tb" style="left:395px;top:475px;font-size:12.5px;color:#2b2b2b;letter-spacing:-0.828px">ABCVENTURE</div>
<div class="a tb" style="left:479.6px;top:475px;font-size:12.5px;color:#2b2b2b">ABC Capita..</div>
<div class="a tb" style="left:520px;top:475px;width:124.5px;text-align:right;font-size:12.8px;color:#2b2b2b">9,973,097.62</div>
<div class="a tb" style="left:395px;top:495px;font-size:12.5px;color:#2b2b2b;letter-spacing:-0.828px">ACTIVESTAF</div>
<div class="a tb" style="left:471.0px;top:495px;font-size:12.5px;color:#2b2b2b">Active Staffi..</div>
<div class="a tb" style="left:520px;top:495px;width:124.5px;text-align:right;font-size:12.8px;color:#2b2b2b">248,990.78</div>
<div class="a tb" style="left:395px;top:515px;font-size:12.5px;color:#2b2b2b;letter-spacing:-0.728px">ALPHABETLD</div>
<div class="a tb" style="left:476.9px;top:515px;font-size:12.5px;color:#2b2b2b">Alphabetla..</div>
<div class="a tb" style="left:520px;top:515px;width:124.5px;text-align:right;font-size:12.8px;color:#2b2b2b">38,800.00</div>
<div class="a tb" style="left:395px;top:535px;font-size:12.5px;color:#2b2b2b;letter-spacing:-0.421px">AMROBANK</div>
<div class="a tb" style="left:469.8px;top:535px;font-size:12.5px;color:#2b2b2b">AMRO Bank ..</div>
<div class="a tb" style="left:520px;top:535px;width:124.5px;text-align:right;font-size:12.8px;color:#2b2b2b">41,043.00</div>
<div class="a tb" style="left:395px;top:555px;font-size:12.5px;color:#2b2b2b;letter-spacing:-0.728px">ANTUNSWEST</div>
<div class="a tb" style="left:483.4px;top:555px;font-size:12.5px;color:#2b2b2b">Antun’s of..</div>
<div class="a tb" style="left:520px;top:555px;width:124.5px;text-align:right;font-size:12.8px;color:#2b2b2b">55,172.25</div>
<div class="a tb" style="left:395px;top:575px;font-size:12.5px;color:#2b2b2b;letter-spacing:-1.061px">APOSTELSCH</div>
<div class="a tb" style="left:476.6px;top:575px;font-size:12.5px;color:#2b2b2b">Church of T..</div>
<div class="a tb" style="left:520px;top:575px;width:124.5px;text-align:right;font-size:12.8px;color:#2b2b2b">5,202,506.09</div>
<div class="a tb" style="left:395px;top:595px;font-size:12.5px;color:#2b2b2b;letter-spacing:-1.221px">ARTCAGES</div>
<div class="a tb" style="left:462.4px;top:595px;font-size:12.5px;color:#2b2b2b">Artcages</div>
<div class="a tb" style="left:520px;top:595px;width:124.5px;text-align:right;font-size:12.8px;color:#2b2b2b">4,918,330.64</div>
<div class="a tb" style="left:395px;top:615px;font-size:12.5px;color:#2b2b2b;letter-spacing:-0.617px">ASBLBAR</div>
<div class="a tb" style="left:455.5px;top:615px;font-size:12.5px;color:#2b2b2b">Nautilus Bar S..</div>
<div class="a tb" style="left:520px;top:615px;width:124.5px;text-align:right;font-size:12.8px;color:#2b2b2b">18,803.27</div>
<div class="a tb" style="left:395px;top:635px;font-size:12.5px;color:#2b2b2b;letter-spacing:-0.900px">BEAUTYSCH</div>
<div class="a tb" style="left:470.8px;top:635px;font-size:12.5px;color:#2b2b2b">New York In..</div>
<div class="a tb" style="left:520px;top:635px;width:124.5px;text-align:right;font-size:12.8px;color:#2b2b2b">2,924,744.40</div>
<div class="a tb" style="left:395px;top:655px;font-size:12.5px;color:#2b2b2b;letter-spacing:-0.661px">BESTYPEIMG</div>
<div class="a tb" style="left:476.7px;top:655px;font-size:12.5px;color:#2b2b2b">Bestype Im..</div>
<div class="a tb" style="left:520px;top:655px;width:124.5px;text-align:right;font-size:12.8px;color:#2b2b2b">22,636.78</div>
<div class="a tb" style="left:395px;top:675px;font-size:12.5px;color:#2b2b2b;letter-spacing:-0.050px">BIBIMBAB</div>
<div class="a tb" style="left:461.0px;top:675px;font-size:12.5px;color:#2b2b2b">Bibimbab Kor..</div>
<div class="a tb" style="left:520px;top:675px;width:124.5px;text-align:right;font-size:12.8px;color:#2b2b2b">3,122,178.21</div>
<div class="a tb" style="left:395px;top:695px;font-size:12.5px;color:#2b2b2b;letter-spacing:-0.872px">BNRCONTRAC</div>
<div class="a tb" style="left:481.5px;top:695px;font-size:12.5px;color:#2b2b2b">BNR Contr..</div>
<div class="a tb" style="left:520px;top:695px;width:124.5px;text-align:right;font-size:12.8px;color:#2b2b2b">230,199.38</div>
<div class="a tb" style="left:395px;top:715px;font-size:12.5px;color:#2b2b2b;letter-spacing:-1.006px">BORDERSHOP</div>
<div class="a tb" style="left:482.5px;top:715px;font-size:12.5px;color:#2b2b2b">Borders B..</div>
<div class="a tb" style="left:520px;top:715px;width:124.5px;text-align:right;font-size:12.8px;color:#2b2b2b">699,978.19</div>
<div class="a tb" style="left:395px;top:735px;font-size:12.5px;color:#2b2b2b;letter-spacing:-0.987px">BOULDERCR</div>
<div class="a tb" style="left:472.0px;top:735px;font-size:12.5px;color:#2b2b2b">Boulder Cou..</div>
<div class="a tb" style="left:520px;top:735px;width:124.5px;text-align:right;font-size:12.8px;color:#2b2b2b">192,451.10</div>
<div class="a tb" style="left:395px;top:755px;font-size:12.5px;color:#2b2b2b;letter-spacing:-1.036px">BRASSKEY</div>
<div class="a tb" style="left:462.4px;top:755px;font-size:12.5px;color:#2b2b2b">Brass Key Bar</div>
<div class="a tb" style="left:520px;top:755px;width:124.5px;text-align:right;font-size:12.8px;color:#2b2b2b">5,298,361.15</div>
<div class="a" style="left:389px;top:776px;width:260px;height:1px;background:#c8c8c8"></div>
<div class="a" style="left:650px;top:410px;width:9px;height:348px;background:#f2f2f2"></div>
<div class="a" style="left:650px;top:410px;width:9px;height:72px;background:#dadada"></div>
<div class="a" style="left:0;top:788px;width:795px;height:31px;background:#e6e6e6;border-top:1px solid #d0d0d0;border-bottom:1px solid #cfcfcf"></div>
<div class="a" style="left:0;top:789px;width:51px;height:29px;background:#fff"></div>
<div class="a" style="left:51px;top:789px;width:1px;height:29px;background:#d0d0d0"></div>
<div class="a" style="left:83px;top:789px;width:1px;height:29px;background:#d0d0d0"></div>
<div class="a" style="left:115px;top:789px;width:1px;height:29px;background:#d0d0d0"></div>
<div class="a" style="left:147px;top:789px;width:1px;height:29px;background:#d0d0d0"></div>
<div class="a tb" style="left:1.5px;top:795px;font-size:12.7px;color:#2b2b2b;-webkit-text-stroke:0.35px #2b2b2b">Sheet 1</div>
<svg style="left:61px;top:795px" width="17" height="17" viewBox="0 0 17 17" fill="none" stroke="#5a5a5a" stroke-width="1.1"><path d="M5.5 10.5 H0.6 V0.6 H11 V4.8"/><path d="M3.3 8 V6.5 M5.6 8 V3.5 M7.9 8 V4.5" stroke-width="1.2"/><path d="M7.2 10.5 H15.2 M11.2 6.5 V14.5" stroke-width="2.4"/></svg>
<svg style="left:93px;top:795px" width="17" height="17" viewBox="0 0 17 17" fill="none" stroke="#5a5a5a" stroke-width="1.1"><path d="M5.5 10.5 H0.6 V0.6 H11 V4.8 M0.6 5.5 H11 M5.8 0.6 V10.5"/><path d="M7.2 10.5 H15.2 M11.2 6.5 V14.5" stroke-width="2.4"/></svg>
<svg style="left:125px;top:795px" width="17" height="17" viewBox="0 0 17 17" fill="none" stroke="#5a5a5a" stroke-width="1.1"><path d="M5 9.3 L0.6 10.5 V0.6 L5 1.8 L10.5 0.6 V4.8 M5 1.8 V9.3"/><path d="M7.2 10.5 H15.2 M11.2 6.5 V14.5" stroke-width="2.4"/></svg>
<div class="a" style="left:0;top:819px;width:795px;height:19px;background:#efefef"></div>
<div class="a tb" style="left:5px;top:821px;font-size:11px;color:#333">93 marks</div>
<div class="a tb" style="left:61px;top:821px;font-size:10.6px;color:#333">93 rows by 1 column</div>
<div class="a tb" style="left:168px;top:821px;font-size:10.6px;color:#333">SUM(Sales): 313,594,066.23</div>
<div class="a" style="left:732px;top:815px;width:61px;height:30px;border:1px solid #dadada;background:#ededed"></div>
<div class="a" style="left:739px;top:822px;font-size:14px;color:#b0b0b0">Record</div>
<!-- /PANES2 -->
<!-- tableau toolbar -->
<div class="a" style="left:119px;top:219px;width:1px;height:35px;background:#d4d4d4"></div>
<div class="a" style="left:196px;top:219px;width:1px;height:35px;background:#d4d4d4"></div>
<div class="a" style="left:325px;top:219px;width:1px;height:35px;background:#d4d4d4"></div>
<div class="a" style="left:470px;top:219px;width:1px;height:35px;background:#d4d4d4"></div>
<div class="a" style="left:626px;top:219px;width:1px;height:35px;background:#d4d4d4"></div>
<div class="a" style="left:683px;top:219px;width:1px;height:35px;background:#d4d4d4"></div>
<svg style="left:0;top:216px" width="795" height="40" viewBox="0 216 795 40" fill="none" stroke="#666" stroke-width="1.3">
<path d="M17 236.5 H4.5 M10 231 L4.5 236.5 L10 242"/>
<path d="M37 236.5 H49.5 M44 231 L49.5 236.5 L44 242"/>
<path d="M76 234 H70 Q66.5 234 66.5 236.9 Q66.5 239.5 70 239.5 H80.5 Q84 239.5 84 236.9 Q84 234.5 81 234 M75 234 H82"/>
<path d="M78.5 230.5 L83 234 L78.5 237.5 Z" fill="#666" stroke="none"/>
<path d="M95 234 H102.6 L98.8 238.9 Z" fill="#666" stroke="none"/>
<!-- cylinders -->
<path d="M135.3 231.5 Q135.3 229 140.3 229 Q145.3 229 145.3 231.5 Q145.3 234 140.3 234 Q135.3 234 135.3 231.5 V241.5 Q135.3 243.5 139 243.8 M145.3 231.5 V237.5"/>
<path d="M141.6 243 H149.2 M145.4 239.2 V246.9" stroke-width="2"/>
<path d="M167.5 231.5 Q167.5 229 172.5 229 Q177.5 229 177.5 231.5 Q177.5 234 172.5 234 Q167.5 234 167.5 231.5 V241.5 Q167.5 243.5 171 243.8 M177.5 231.5 V237.5"/>
<path d="M174.6 240 V247 M177.6 240 V247" stroke-width="1.8"/>
<!-- chart+ -->
<path d="M221 243.5 H211.5 V229.5 H226 V237"/>
<path d="M214.5 241 V236.5 M217.7 241 V232.5 M220.9 241 V235" stroke-width="1.6"/>
<path d="M221.9 242.6 H229.9 M225.9 238.6 V246.6" stroke-width="2"/>
<path d="M230.4 235.5 H235 L232.7 238.3 Z" fill="#666" stroke="none"/>
<!-- duplicate -->
<path d="M256.8 234.8 V228.5 H267.5 V237 H261.5"/>
<path d="M259.5 235.5 V232 M262 235.5 V230.5 M264.5 235.5 V233" stroke-width="1.3"/>
<path d="M250.3 235.3 H261.5 V244.5 H250.3 Z"/>
<path d="M252.5 242.5 V240 M255 242.5 V240 M257.5 242.5 V240" stroke-width="1.3"/>
<!-- chart x -->
<path d="M293 243.5 H283.5 V229.5 H299 V236"/>
<path d="M286.5 241 V236.5 M289.7 241 V232.5 M292.9 238 V235" stroke-width="1.6"/>
<path d="M294.8 238.3 L301.7 245.3 M301.7 238.3 L294.8 245.3" stroke-width="1.7"/>
<path d="M305.2 235.5 H310 L307.6 238.3 Z" fill="#666" stroke="none"/>
<!-- swap -->
<path d="M340 229.2 H343 V232.2 H340 Z M344.8 229.2 H347.8 V232.2 H344.8 Z M349.6 229.2 H352.6 V232.2 H349.6 Z M340 234 H343 V237 H340 Z M340 238.8 H343 V241.8 H340 Z"/>
<path d="M356.5 234 Q356 242 347 245" />
<path d="M354 235 L356.6 231.5 L358.8 235.5 Z M348.5 242.5 L345.5 245.5 L349.5 247 Z" fill="#666" stroke="none"/>
<!-- sort asc -->
<path d="M373.3 230.5 V243" />
<path d="M370.5 240.5 L373.3 244 L376.1 240.5 Z" fill="#666" stroke="none"/>
<path d="M377.8 230.7 H382.8 V234.3 H377.8 Z M377.8 236.2 H385.8 V239.8 H377.8 Z M377.8 241.4 H388 V245 H377.8 Z" stroke-width="1.2"/>
<!-- sort desc -->
<path d="M405.8 230.5 V243" />
<path d="M403 240.5 L405.8 244 L408.6 240.5 Z" fill="#666" stroke="none"/>
<path d="M410 230.7 H420 V234.3 H410 Z M410 236.2 H417.5 V239.8 H410 Z M410 241.4 H413.8 V245 H410 Z" stroke-width="1.2"/>
<!-- sigma -->
<path d="M447 231.2 V230 H436.3 L442.3 237.2 L436.3 244 H447.2 V242.8" stroke-width="1.4"/>
<path d="M450 235.5 H455 L452.5 238.3 Z" fill="#666" stroke="none"/>
</svg>
<div class="a" style="left:478px;top:222px;width:33px;height:30px;background:#e4e4e4"></div>
<svg style="left:0;top:216px" width="795" height="40" viewBox="0 216 795 40" fill="none" stroke="#666" stroke-width="1.3">
<!-- pencil -->
<path d="M486 238.5 L492.8 228.5 Q494 227.2 495.5 228.2 Q496.8 229.3 496 230.6 L489.2 240.5 L486 241.5 Z M491.5 230.5 L494.5 232.6" stroke-width="1.2"/>
<path d="M484.5 244.3 H497" stroke-width="2"/>
<path d="M498 235.5 H502.8 L500.4 238.3 Z" fill="#666" stroke="none"/>
<!-- dotted T -->
<path d="M519.8 229.5 H535.5 V243.2 H519.8 Z" stroke="#c8c8c8" stroke-width="1" stroke-dasharray="1.5 1.5"/>
<path d="M524.5 232.8 H531 M527.7 232.8 V240 M525.5 240 H530 M524.5 232.8 V234.5 M531 232.8 V234.5" stroke="#c0c0c0" stroke-width="1.1"/>
<!-- dotted brush -->
<path d="M553 231 H559 M553 231 V243.2 H568.2 V237" stroke-width="1.2" stroke-dasharray="2 1.5"/>
<path d="M567.5 228 L562.5 236.5" stroke-width="1.8"/>
<path d="M560 238.5 Q561.5 236 563.5 237.5 Q563.5 240.5 559.5 241 Z" fill="#666" stroke="none"/>
<!-- fit -->
<path d="M583.2 233 H596.8 V243.2 H583.2 Z"/>
<path d="M584 228.5 V230.5 M584 229.5 H596 M596 228.5 V230.5"/>
<path d="M601.3 230 V243 M599.5 230 H603 M599.5 243 H603"/>
<path d="M606.4 235.5 H610.8 L608.6 238.3 Z" fill="#666" stroke="none"/>
<!-- show me -->
<path d="M640.5 230.2 H644.2 V233.2 H640.5 Z M640.5 235.2 H644.2 V238.2 H640.5 Z M640.5 240.2 H644.2 V243.2 H640.5 Z" stroke-width="1.1"/>
<path d="M647 230.2 H659.5 V243.2 H647 Z"/>
<path d="M650 241.5 V237 M653 241.5 V234.5 M656 241.5 V232.5" stroke-width="1.7"/>
<path d="M665.3 235.5 H670 L667.6 238.3 Z" fill="#666" stroke="none"/>
<!-- download -->
<path d="M702.5 240.5 H698.5 V229 H712.5 V240.5 H708.5 M705.5 233.5 V242"/>
<path d="M702.3 240.5 L705.5 244.3 L708.7 240.5 Z" fill="#666" stroke="none"/>
<!-- present -->
<path d="M731.5 240 H728 V228.5 H746.8 V241 H737 M737.5 241 V245 M734.5 245.3 H740.5"/>
<path d="M728.5 244.5 L733.5 239.5" stroke-width="1.5"/>
<path d="M730.5 238.8 H734.5 V242.5 Z" fill="#666" stroke="none"/>
</svg>

</body></html>
